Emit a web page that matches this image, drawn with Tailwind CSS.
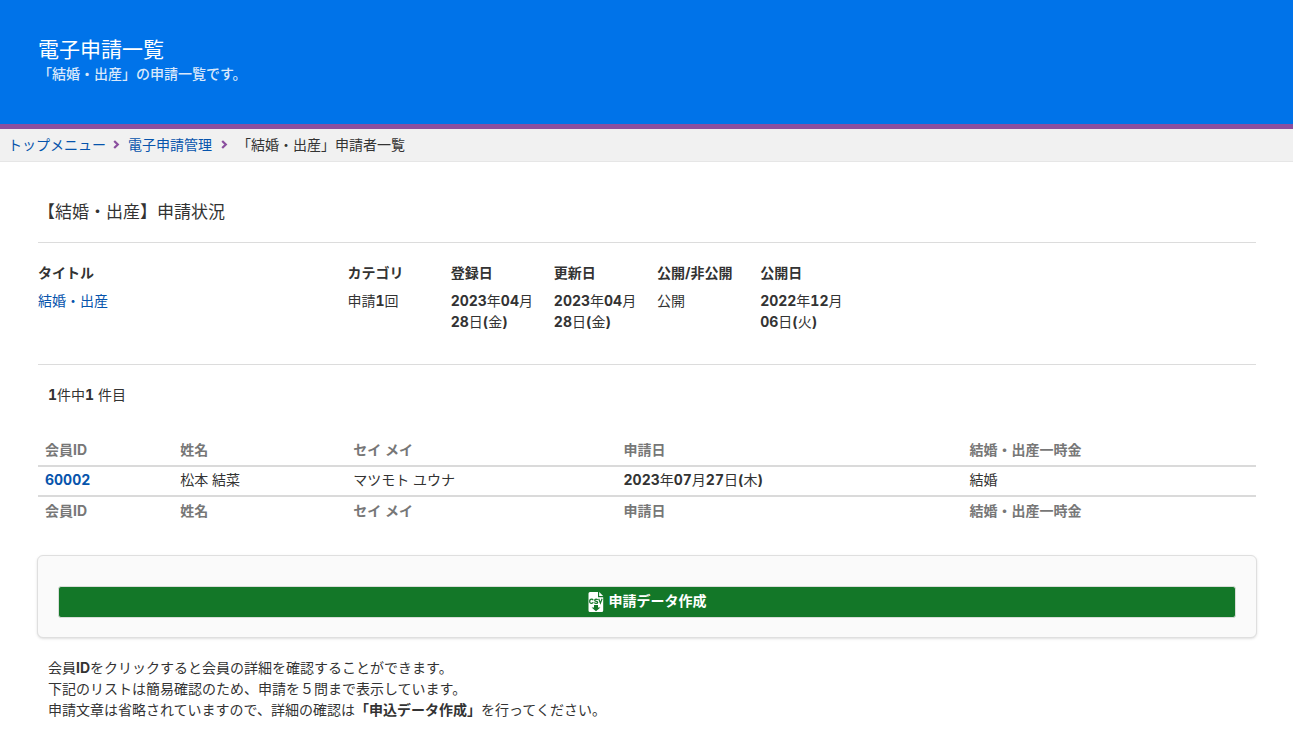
<!DOCTYPE html>
<html lang="ja">
<head>
<meta charset="utf-8">
<meta name="viewport" content="width=device-width, initial-scale=1">
<title>電子申請一覧</title>
<script src="https://cdn.jsdelivr.net/npm/@tailwindcss/browser@4"></script>
</head>
<body class="bg-white font-['Inter','Noto_Sans_CJK_JP',sans-serif] text-[14px] leading-[21px] text-[#333333] tabular-nums">
<header class="border-b-5 border-[#8b4f9f] bg-[#0073e9] px-[38px] pt-[37px] pb-[40px]">
  <h1 class="text-[21px] leading-[26px] text-white">電子申請一覧</h1>
  <p class="font-medium text-[#d9e8fb]">「結婚・出産」の申請一覧です。</p>
</header>
<nav aria-label="パンくず" class="border-b border-[#e6e6e6] bg-[#f1f1f1] px-2 pt-[5px] pb-[6px]">
  <ol class="flex items-center">
    <li><a href="#" class="text-[#0654ac]">トップメニュー</a></li>
    <li aria-hidden="true" class="flex w-[22px] justify-center pr-[2px]"><svg class="h-[9px] w-[7px]" viewBox="0 0 7 9" fill="none" stroke="#8b4f9f" stroke-width="2.200"><path d="M1.200 1l3.600 3.500L1.200 8"/></svg></li>
    <li><a href="#" class="text-[#0654ac]">電子申請管理</a></li>
    <li aria-hidden="true" class="flex w-[25px] justify-center"><svg class="h-[9px] w-[7px]" viewBox="0 0 7 9" fill="none" stroke="#8b4f9f" stroke-width="2.200"><path d="M1.200 1l3.600 3.500L1.200 8"/></svg></li>
    <li>「結婚・出産」申請者一覧</li>
  </ol>
</nav>
<main class="pt-[37px] pr-[37px] pb-5 pl-[38px]">
  <h2 class="border-b border-[#dcdcdc] pb-[17px] text-[17px] leading-[26px]">【結婚・出産】申請状況</h2>
  <section class="border-b border-[#dcdcdc] pt-[19px] pb-[32px]">
    <dl class="-mx-[10px] grid grid-cols-12 *:px-[10px]">
      <div class="col-span-3"><dt class="mb-[7px] font-bold">タイトル</dt><dd><a href="#" class="text-[#0654ac]">結婚・出産</a></dd></div>
      <div><dt class="mb-[7px] font-bold">カテゴリ</dt><dd>申請<b>1</b>回</dd></div>
      <div><dt class="mb-[7px] font-bold">登録日</dt><dd class="whitespace-nowrap"><b>2023</b>年<b>04</b>月<br><b>28</b>日<b>(</b>金<b>)</b></dd></div>
      <div><dt class="mb-[7px] font-bold">更新日</dt><dd class="whitespace-nowrap"><b>2023</b>年<b>04</b>月<br><b>28</b>日<b>(</b>金<b>)</b></dd></div>
      <div><dt class="mb-[7px] font-bold whitespace-nowrap">公開/非公開</dt><dd>公開</dd></div>
      <div><dt class="mb-[7px] font-bold">公開日</dt><dd class="whitespace-nowrap"><b>2022</b>年<b>12</b>月<br><b>06</b>日<b>(</b>火<b>)</b></dd></div>
    </dl>
  </section>
  <p class="px-[10px] pt-[19px]"><b>1</b>件中<b>1</b> 件目</p>
  <table class="mt-[31px] w-full table-fixed border-collapse text-left">
    <colgroup><col class="w-[11.1%]"><col class="w-[14.2%]"><col class="w-[22.2%]"><col class="w-[28.4%]"><col class="w-[24.1%]"></colgroup>
    <thead class="text-[#777777]"><tr class="h-[30px] *:px-[7px] *:pt-0 *:pb-[2px]"><th>会員ID</th><th>姓名</th><th>セイ メイ</th><th>申請日</th><th>結婚・出産一時金</th></tr></thead>
    <tbody class="border-y-2 border-[#dadada]"><tr class="h-[30px] *:px-[7px] *:pt-0 *:pb-[3px]"><td><a href="#" class="font-bold text-[#0654ac]">60002</a></td><td>松本 結菜</td><td>マツモト ユウナ</td><td><b>2023</b>年<b>07</b>月<b>27</b>日<b>(</b>木<b>)</b></td><td>結婚</td></tr></tbody>
    <tfoot class="text-[#777777]"><tr class="h-[30px] *:px-[7px] *:pt-0 *:pb-[3px]"><th>会員ID</th><th>姓名</th><th>セイ メイ</th><th>申請日</th><th>結婚・出産一時金</th></tr></tfoot>
  </table>
  <div class="-mx-px mt-[29px] rounded-md border border-[#dfdfdf] bg-[#fafafa] px-[20px] pt-[30px] pb-[19px] shadow-sm">
    <button type="button" class="flex h-[32px] w-full items-center justify-center gap-[5px] rounded-[3px] border border-[#d8ddd8] bg-[#137728] font-bold text-white">
      <svg class="h-[20px] w-[16px]" viewBox="0 0 16 20" aria-hidden="true">
        <path fill="#fff" d="M2 0h8v5.200h5.200V18.500q0 1.500-1.500 1.500H2q-1.500 0-1.500-1.500v-17Q.5 0 2 0z"/>
        <path fill="#fff" d="M11.200 0l4 4h-4z"/>
        <g fill="none" stroke="#137728" stroke-width="1.200"><path d="M5.200 8.200Q4.800 7.200 3.500 7.200 1.700 7.200 1.700 9.300T3.500 11.400Q4.900 11.400 5.200 10.200"/><path d="M9.600 8.100Q9.200 7.200 8 7.200 6.700 7.200 6.700 8.200T8.200 9.300 9.700 10.400 8.200 11.400 6.500 10.300"/><path d="M10.700 6.800l1.700 4.400 1.700-4.400"/></g>
        <path fill="#137728" d="M6 13h4v2.400h2.400L8 19.300l-4.400-3.900H6z"/>
      </svg>
      <span class="pb-[3px]">申請データ作成</span>
    </button>
  </div>
  <p class="mt-[19px] px-[10px]">会員<b>ID</b>をクリックすると会員の詳細を確認することができます。<br>下記のリストは簡易確認のため、申請を５問まで表示しています。<br>申請文章は省略されていますので、詳細の確認は<b>「申込データ作成」</b>を行ってください。</p>
</main>
</body>
</html>
